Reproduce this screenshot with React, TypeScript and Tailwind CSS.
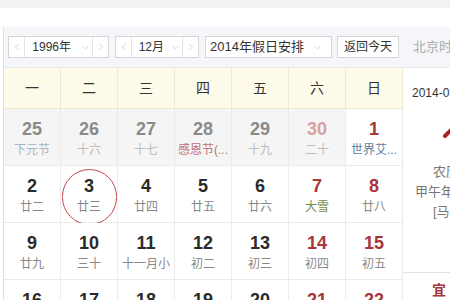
import { ChevronDown, ChevronLeft, ChevronRight } from 'lucide-react';

type Day = {
  num: string;
  sub: string;
  prev?: boolean;
  red?: boolean;
  subTone?: 'gray' | 'blue' | 'red' | 'green';
  today?: boolean;
};

const weekdays = ['一', '二', '三', '四', '五', '六', '日'];

const rows: Day[][] = [
  [
    { num: '25', sub: '下元节', prev: true, subTone: 'blue' },
    { num: '26', sub: '十六', prev: true },
    { num: '27', sub: '十七', prev: true },
    { num: '28', sub: '感恩节(...', prev: true, subTone: 'red' },
    { num: '29', sub: '十九', prev: true },
    { num: '30', sub: '二十', prev: true, red: true },
    { num: '1', sub: '世界艾...', red: true, subTone: 'blue' },
  ],
  [
    { num: '2', sub: '廿二' },
    { num: '3', sub: '廿三', today: true },
    { num: '4', sub: '廿四' },
    { num: '5', sub: '廿五' },
    { num: '6', sub: '廿六' },
    { num: '7', sub: '大雪', red: true, subTone: 'green' },
    { num: '8', sub: '廿八', red: true },
  ],
  [
    { num: '9', sub: '廿九' },
    { num: '10', sub: '三十' },
    { num: '11', sub: '十一月小' },
    { num: '12', sub: '初二' },
    { num: '13', sub: '初三' },
    { num: '14', sub: '初四', red: true },
    { num: '15', sub: '初五', red: true },
  ],
  [
    { num: '16', sub: '初六' },
    { num: '17', sub: '初七' },
    { num: '18', sub: '初八' },
    { num: '19', sub: '初九' },
    { num: '20', sub: '初十' },
    { num: '21', sub: '十一', red: true },
    { num: '22', sub: '冬至', red: true },
  ],
];

function numColor(d: Day) {
  if (d.prev) return d.red ? 'text-[#d9a0a0]' : 'text-[#8a8a8a]';
  return d.red ? 'text-[#a8343c]' : 'text-[#2a2a2a]';
}

function subColor(d: Day) {
  if (d.subTone === 'blue') return d.prev ? 'text-[#a7b6c8]' : 'text-[#5d7fa3]';
  if (d.subTone === 'red') return 'text-[#c27272]';
  if (d.subTone === 'green') return 'text-[#6f8d4f]';
  return d.prev ? 'text-[#bdbdbd]' : 'text-[#888]';
}

function Stepper({ label, width, gap }: { label: string; width: string; gap: string }) {
  return (
    <div className={`flex h-[22px] shrink-0 ${width} items-stretch border border-[#d6d6d6] bg-white`}>
      <div className="flex w-[16px] shrink-0 items-center justify-center border-r border-[#e2e2e2] text-[#c4c4c4]">
        <ChevronLeft size={12} strokeWidth={1.5} />
      </div>
      <div className={`flex flex-1 items-center justify-end ${gap} pr-[1px] text-[12px] text-[#333]`}>
        <span>{label}</span>
        <ChevronDown size={11} strokeWidth={1.5} className="text-[#c8c8c8]" />
      </div>
      <div className="flex w-[16px] shrink-0 items-center justify-center border-l border-[#e2e2e2] text-[#c4c4c4]">
        <ChevronRight size={12} strokeWidth={1.5} />
      </div>
    </div>
  );
}

function Cell({ d }: { d: Day }) {
  const bg = d.prev ? 'bg-[#f5f5f5]' : 'bg-white';
  return (
    <div className={`relative flex h-[57px] flex-col items-center border-r border-b border-[#ebebeb] pt-[10px] ${bg}`}>
      {d.today && (
        <div className="absolute left-[1px] top-[3px] h-[56px] w-[55px] rounded-full border border-[#c9484c]" />
      )}
      <span className={`text-[18px] font-bold leading-[21px] ${numColor(d)}`}>{d.num}</span>
      <span className={`mt-[1px] whitespace-nowrap text-[12px] leading-[18px] ${subColor(d)}`}>{d.sub}</span>
    </div>
  );
}

export default function App() {
  return (
    <div
      className="h-[300px] w-[450px] overflow-hidden bg-white"
      style={{ fontFamily: '"Liberation Sans", "Noto Sans CJK SC", sans-serif' }}
    >
      <div className="h-[8px] bg-[#f3f3f3]" />
      <div className="h-[19px]" />
      <div className="ml-[3px] border-l border-[#dedede]">
        <div className="flex h-[40px] items-center overflow-hidden whitespace-nowrap bg-[#f5f6fa] pl-[4px]">
          <Stepper label="1996年" width="w-[101px]" gap="gap-[9px]" />
          <div className="ml-[6px]">
            <Stepper label="12月" width="w-[84px]" gap="gap-[6px]" />
          </div>
          <div className="ml-[6px] flex h-[22px] w-[127px] shrink-0 items-center justify-between border border-[#d6d6d6] bg-white pl-[4px] pr-[8px] text-[13px] text-[#333]">
            <span>2014年假日安排</span>
            <ChevronDown size={11} strokeWidth={1.5} className="text-[#c8c8c8]" />
          </div>
          <div className="ml-[5px] flex h-[22px] w-[62px] shrink-0 items-center justify-center border border-[#d6d6d6] bg-white text-[12px] text-[#333]">
            返回今天
          </div>
          <span className="ml-[14px] shrink-0 text-[13px] text-[#aaa]">北京时间</span>
        </div>
        <div className="flex">
          <div className="grid w-[399px] shrink-0 grid-cols-7 border-t border-[#e6e6e6]">
            {weekdays.map((w) => (
              <div
                key={w}
                className="flex h-[41px] items-center justify-center border-r border-b border-[#efe9d2] bg-[#fefbea] text-[14px] text-[#333]"
              >
                {w}
              </div>
            ))}
            {rows.flat().map((d, i) => (
              <Cell key={i} d={d} />
            ))}
          </div>
          <div className="flex min-w-0 flex-1 flex-col overflow-hidden whitespace-nowrap border-t border-[#e6e6e6] bg-white">
            <div className="pl-[9px] pt-[17px] text-[12px] leading-[16px] text-[#333]">2014-03-12 星期三</div>
            <div className="h-[45px] pl-[40px] pt-[23px]">
              <svg width="12" height="14" viewBox="0 0 12 14">
                <path d="M2 12 L12 2" stroke="#b0202a" strokeWidth="4" strokeLinecap="round" />
              </svg>
            </div>
            <div className="pl-[30px] pt-[16px] text-[13px] leading-[20px] text-[#777]">农历十月廿三</div>
            <div className="pl-[12px] text-[13px] leading-[20px] text-[#777]">甲午年 乙亥月 丙申日</div>
            <div className="pl-[30px] text-[13px] leading-[20px] text-[#777]">[马年]</div>
            <div className="mt-[50px] border-t border-[#e2e2e2] pl-[29px] pt-[8px] text-[14px] font-bold leading-[18px] text-[#a8343c]">
              宜
            </div>
          </div>
        </div>
      </div>
    </div>
  );
}
